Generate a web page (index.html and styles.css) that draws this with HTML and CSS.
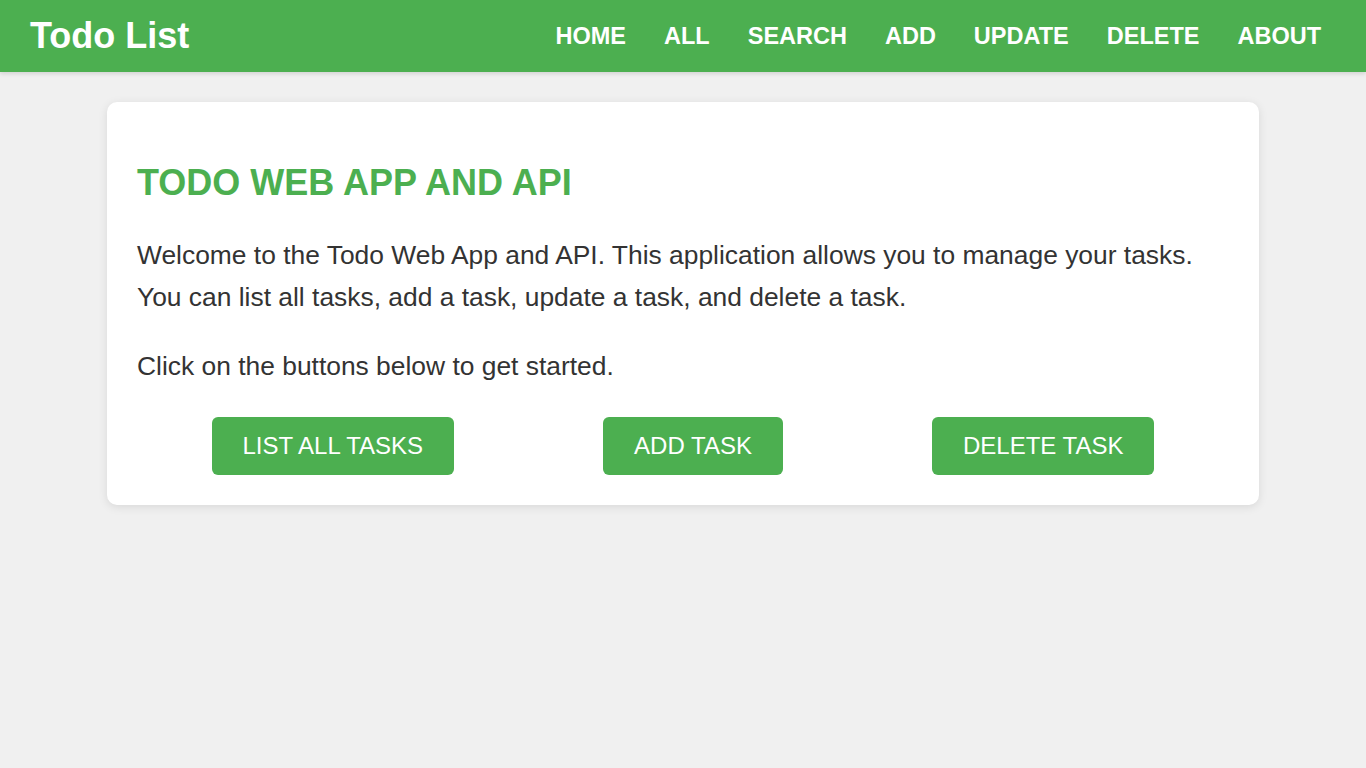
FILE: index.html
```html
<!DOCTYPE html>
<html lang="en">
<head>
<meta charset="utf-8">
<title>Todo List</title>
<link rel="stylesheet" href="styles.css">
</head>
<body>
<header class="topbar">
  <div class="brand">Todo List</div>
  <nav class="nav">
    <a href="#">HOME</a>
    <a href="#">ALL</a>
    <a href="#">SEARCH</a>
    <a href="#">ADD</a>
    <a href="#">UPDATE</a>
    <a href="#">DELETE</a>
    <a href="#">ABOUT</a>
  </nav>
</header>
<main class="card">
  <h2 class="title">TODO WEB APP AND API</h2>
  <p class="text">Welcome to the Todo Web App and API. This application allows you to manage your tasks. You can list all tasks, add a task, update a task, and delete a task.</p>
  <p class="text">Click on the buttons below to get started.</p>
  <div class="actions">
    <a class="btn" href="#">LIST ALL TASKS</a>
    <a class="btn" href="#">ADD TASK</a>
    <a class="btn" href="#">DELETE TASK</a>
  </div>
</main>
</body>
</html>
```

FILE: styles.css
```css
* { box-sizing: border-box; }
body {
  margin: 0;
  background: #f0f0f0;
  font-family: "Liberation Sans", Arial, sans-serif;
  color: #333;
}
.topbar {
  height: 72px;
  background: #4CAF50;
  display: flex;
  align-items: center;
  justify-content: space-between;
  padding: 0 25px 0 30px;
  box-shadow: 0 2px 4px rgba(0,0,0,0.12);
}
.brand {
  color: #fff;
  font-weight: bold;
  font-size: 36px;
}
.nav {
  display: flex;
  gap: 38px;
  padding-right: 20px;
}
.nav a {
  color: #fff;
  text-decoration: none;
  font-weight: bold;
  font-size: 23.5px;
}
.card {
  display: block;
  max-width: 1152px;
  margin: 30px auto;
  background: #fff;
  border-radius: 10px;
  box-shadow: 0 2px 10px rgba(0,0,0,0.1);
  padding: 30px;
}
.title {
  color: #4CAF50;
  font-size: 36px;
  font-weight: bold;
  margin: 30px 0 30px;
}
.text {
  font-size: 26.4px;
  line-height: 1.6;
  margin: 26px 0;
}
.actions {
  display: flex;
  justify-content: space-around;
  margin-top: 30px;
}
.btn {
  background: #4CAF50;
  color: #fff;
  text-decoration: none;
  font-size: 24px;
  line-height: 26px;
  padding: 16px 31px;
  border-radius: 6px;
}
```
